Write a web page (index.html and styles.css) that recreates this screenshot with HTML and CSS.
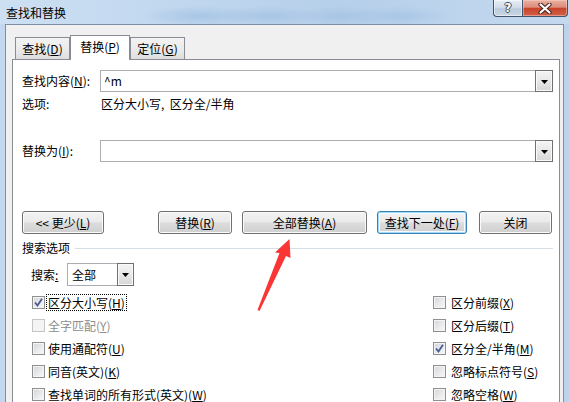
FILE: index.html
```html
<!DOCTYPE html>
<html lang="zh-CN">
<head>
<meta charset="utf-8">
<title>查找和替换</title>
<link rel="stylesheet" href="styles.css">
</head>
<body>
<div class="titlebar">
  <span class="title">查找和替换</span>
  <div class="caption">
    <div class="cap help"><span>?</span></div>
    <div class="cap close">
      <svg width="14" height="11" viewBox="0 0 14 11"><path d="M2.5 1.5 L11.5 9.5 M11.5 1.5 L2.5 9.5" stroke="#43231c" stroke-width="4.2" stroke-linecap="round"/><path d="M2.5 1.5 L11.5 9.5 M11.5 1.5 L2.5 9.5" stroke="#ffffff" stroke-width="2.2" stroke-linecap="round"/></svg>
    </div>
  </div>
</div>
<div class="client">
  <div class="tabs">
    <div class="tab">查找(<u>D</u>)</div>
    <div class="tab active">替换(<u>P</u>)</div>
    <div class="tab">定位(<u>G</u>)</div>
  </div>
  <div class="panel">
    <div class="field">
      <span class="label">查找内容(<u>N</u>):</span>
      <div class="combo"><span class="value">^m</span><span class="dd"><svg width="7" height="4" viewBox="0 0 7 4"><path d="M0 0H7L3.5 4Z" fill="#000"/></svg></span></div>
    </div>
    <div class="opts">
      <span class="label">选项:</span>
      <span class="optval">区分大小写,&nbsp;&nbsp;区分全/半角</span>
    </div>
    <div class="field replace">
      <span class="label">替换为(<u>I</u>):</span>
      <div class="combo"><span class="value"></span><span class="dd"><svg width="7" height="4" viewBox="0 0 7 4"><path d="M0 0H7L3.5 4Z" fill="#000"/></svg></span></div>
    </div>
    <div class="buttons">
      <div class="btn b-less">&lt;&lt; 更少(<u>L</u>)</div>
      <div class="btn b-rep">替换(<u>R</u>)</div>
      <div class="btn b-all">全部替换(<u>A</u>)</div>
      <div class="btn b-next default">查找下一处(<u>F</u>)</div>
      <div class="btn b-close">关闭</div>
    </div>
    <div class="section">
      <span>搜索选项</span>
      <span class="rule"></span>
    </div>
    <div class="search-row">
      <span class="slabel">搜索<u>:</u></span>
      <div class="select"><span class="value">全部</span><span class="dd"><svg width="7" height="4" viewBox="0 0 7 4"><path d="M0 0H7L3.5 4Z" fill="#000"/></svg></span></div>
    </div>
    <div class="checks">
      <div class="col left">
        <div class="check"><span class="box checked"><svg width="11" height="11" viewBox="0 0 11 11"><path d="M2 5.5 L4.5 8.5 L9 1.8" fill="none" stroke="#4a5e94" stroke-width="1.9"/></svg></span><span class="text focus">区分大小写(<u>H</u>)</span></div>
        <div class="check disabled"><span class="box"></span><span class="text">全字匹配(<u>Y</u>)</span></div>
        <div class="check"><span class="box"></span><span class="text">使用通配符(<u>U</u>)</span></div>
        <div class="check"><span class="box"></span><span class="text">同音(英文)(<u>K</u>)</span></div>
        <div class="check"><span class="box"></span><span class="text">查找单词的所有形式(英文)(<u>W</u>)</span></div>
      </div>
      <div class="col right">
        <div class="check"><span class="box"></span><span class="text">区分前缀(<u>X</u>)</span></div>
        <div class="check"><span class="box"></span><span class="text">区分后缀(<u>T</u>)</span></div>
        <div class="check"><span class="box checked"><svg width="11" height="11" viewBox="0 0 11 11"><path d="M2 5.5 L4.5 8.5 L9 1.8" fill="none" stroke="#4a5e94" stroke-width="1.9"/></svg></span><span class="text">区分全/半角(<u>M</u>)</span></div>
        <div class="check"><span class="box"></span><span class="text">忽略标点符号(<u>S</u>)</span></div>
        <div class="check"><span class="box"></span><span class="text">忽略空格(<u>W</u>)</span></div>
      </div>
    </div>
  </div>
</div>
<svg class="arrow" width="569" height="402" viewBox="0 0 569 402">
  <polygon points="289.5,239 290.5,258 286,256 259.5,311 257.5,310 279.5,253 275,252.5" fill="#fb3434"/>
</svg>
</body>
</html>
```

FILE: styles.css
```css
* { box-sizing: border-box; }
html, body { margin: 0; padding: 0; }
body {
  width: 569px;
  height: 402px;
  overflow: hidden;
  position: relative;
  font-family: "Noto Sans CJK SC", "Microsoft YaHei", sans-serif;
  font-size: 12px;
  line-height: 16px;
  color: #000;
  background: linear-gradient(to right, #c3d8ee 0%, #bcd3eb 100%);
}
u { text-decoration: underline; text-underline-offset: 1px; text-decoration-thickness: 1px; }

/* title bar */
.titlebar {
  height: 24px;
  display: flex;
  justify-content: space-between;
  align-items: flex-start;
  background:
    radial-gradient(ellipse 60px 10px at 200px 16px, rgba(150,185,222,0.55), rgba(150,185,222,0)),
    radial-gradient(ellipse 50px 10px at 270px 16px, rgba(150,185,222,0.5), rgba(150,185,222,0)),
    radial-gradient(ellipse 50px 10px at 340px 16px, rgba(150,185,222,0.45), rgba(150,185,222,0)),
    radial-gradient(ellipse 50px 10px at 400px 16px, rgba(150,185,222,0.45), rgba(150,185,222,0)),
    linear-gradient(to right, #cde0f3 0%, #bfd6ee 35%, #b6cfea 60%, #c4d9ef 100%);
}
.title { padding: 1px 0 0 6px; line-height: 24px; color: #000; }
.caption { display: flex; margin-right: 1px; }
.cap {
  height: 17px;
  border: 1px solid #435368;
  border-top: none;
  display: flex;
  align-items: center;
  justify-content: center;
}
.help {
  width: 29px;
  border-right: none;
  border-bottom-left-radius: 4px;
  background: linear-gradient(#e6edf5 0%, #d3dde9 45%, #bccada 55%, #c9d6e4 100%);
  box-shadow: inset 0 0 0 1px rgba(255,255,255,0.5);
}
.help span {
  font-family: "DejaVu Sans", sans-serif;
  font-weight: bold;
  font-size: 12px;
  line-height: 14px;
  color: #fff;
  text-shadow: 1px 0 0 #3e4c5e, -1px 0 0 #3e4c5e, 0 1px 0 #3e4c5e, 0 -1px 0 #3e4c5e;
}
.close {
  width: 46px;
  border-bottom-right-radius: 4px;
  background: linear-gradient(#eab0a2 0%, #dd8c7a 45%, #c8442a 52%, #d2604a 100%);
  box-shadow: inset 0 0 0 1px rgba(255,220,210,0.45);
}

/* client */
.client {
  margin: 0 5px;
  height: 378px;
  border: 1px solid #7d8ea3;
  border-bottom: none;
  background: #f0f0f0;
  padding: 10px 3px 0 6px;
  overflow: hidden;
}
.tabs {
  display: flex;
  align-items: flex-end;
  height: 24px;
  padding-left: 3px;
}
.tab {
  width: 55px;
  height: 22px;
  border: 1px solid #898c95;
  border-bottom: none;
  background: linear-gradient(#f3f3f3 0%, #ebebeb 50%, #dedede 100%);
  display: flex;
  align-items: center;
  justify-content: center;
  padding-top: 1px;
}
.tab.active {
  width: 60px;
  height: 25px;
  margin-bottom: -1px;
  position: relative;
  z-index: 1;
  background: #fff;
  padding: 0 0 2px 0;
}
.panel {
  height: 343px;
  overflow: hidden;
  border: 1px solid #898c95;
  border-bottom: none;
  background: #fff;
  padding: 10px 6px 0 9px;
}

.field {
  display: grid;
  grid-template-columns: 78px 1fr;
  align-items: center;
  height: 22px;
}
.field.replace { margin-top: 28px; }
.combo {
  display: flex;
  height: 22px;
  border: 1px solid #abadb3;
}
.combo .value { flex: 1; padding-left: 3px; line-height: 20px; }
.dd {
  width: 18px;
  margin: -1px -1px -1px 0;
  border: 1px solid #707070;
  background: linear-gradient(#f4f4f4 0%, #e8e8e8 50%, #d6d6d6 100%);
  box-shadow: inset 0 0 0 1px #fafafa;
  display: flex;
  align-items: center;
  justify-content: center;
  padding-top: 1px;
}
.opts {
  display: grid;
  grid-template-columns: 79px 1fr;
  margin-top: 4px;
  height: 16px;
}

.buttons {
  display: flex;
  margin-top: 49px;
  height: 23px;
}
.btn {
  height: 23px;
  border: 1px solid #707070;
  border-radius: 3px;
  background: linear-gradient(#f2f2f2 0%, #ebebeb 45%, #dddddd 52%, #cfcfcf 100%);
  box-shadow: inset 0 0 0 1px #fbfbfb;
  display: flex;
  align-items: center;
  justify-content: center;
  line-height: 16px;
}
.btn.default {
  border-color: #3c7fb1;
  box-shadow: inset 0 0 0 1px #9ddcf9, inset 0 0 0 2px #f4fbfe;
}
.b-less { width: 82px; }
.b-rep { width: 74px; margin-left: 54px; }
.b-all { width: 125px; margin-left: 10px; }
.b-next { width: 90px; margin-left: 10px; }
.b-close { width: 73px; margin-left: 12px; }

.section {
  display: flex;
  align-items: center;
  margin-top: 6px;
  height: 16px;
}
.section .rule {
  flex: 1;
  height: 1px;
  margin-left: 5px;
  background: #d5dfe5;
}

.search-row {
  display: flex;
  align-items: center;
  margin-top: 7px;
  height: 23px;
  padding-left: 9px;
}
.slabel { width: 36px; }
.select {
  display: flex;
  width: 67px;
  height: 23px;
  border: 1px solid #abadb3;
}
.select .value { flex: 1; padding-left: 4px; line-height: 21px; }
.select .dd { width: 17px; }

.checks {
  display: flex;
  margin-top: 5px;
  padding-left: 10px;
}
.col.left { width: 401px; }
.col { display: flex; flex-direction: column; }
.check {
  display: flex;
  align-items: center;
  height: 23px;
  gap: 3px;
}
.col.right .check { gap: 5px; }
.box {
  width: 13px;
  height: 13px;
  border: 1px solid #8e8f8f;
  background: linear-gradient(135deg, #d2d4d8 0%, #e9eaec 55%, #f8f8f8 100%);
  box-shadow: inset 0 0 0 1px #f4f4f4;
  display: flex;
  align-items: center;
  justify-content: center;
}
.text { line-height: 15px; white-space: nowrap; }
.text.focus {
  margin-left: -2px;
  padding: 0 1px 0 1px;
  border: 1px dotted #000;
}
.check.disabled .text { color: #8d8d8d; }
.check.disabled .box {
  border-color: #c5c5c5;
  background: #f4f4f4;
  box-shadow: none;
}

.arrow {
  position: absolute;
  left: 0;
  top: 0;
  pointer-events: none;
}
```
